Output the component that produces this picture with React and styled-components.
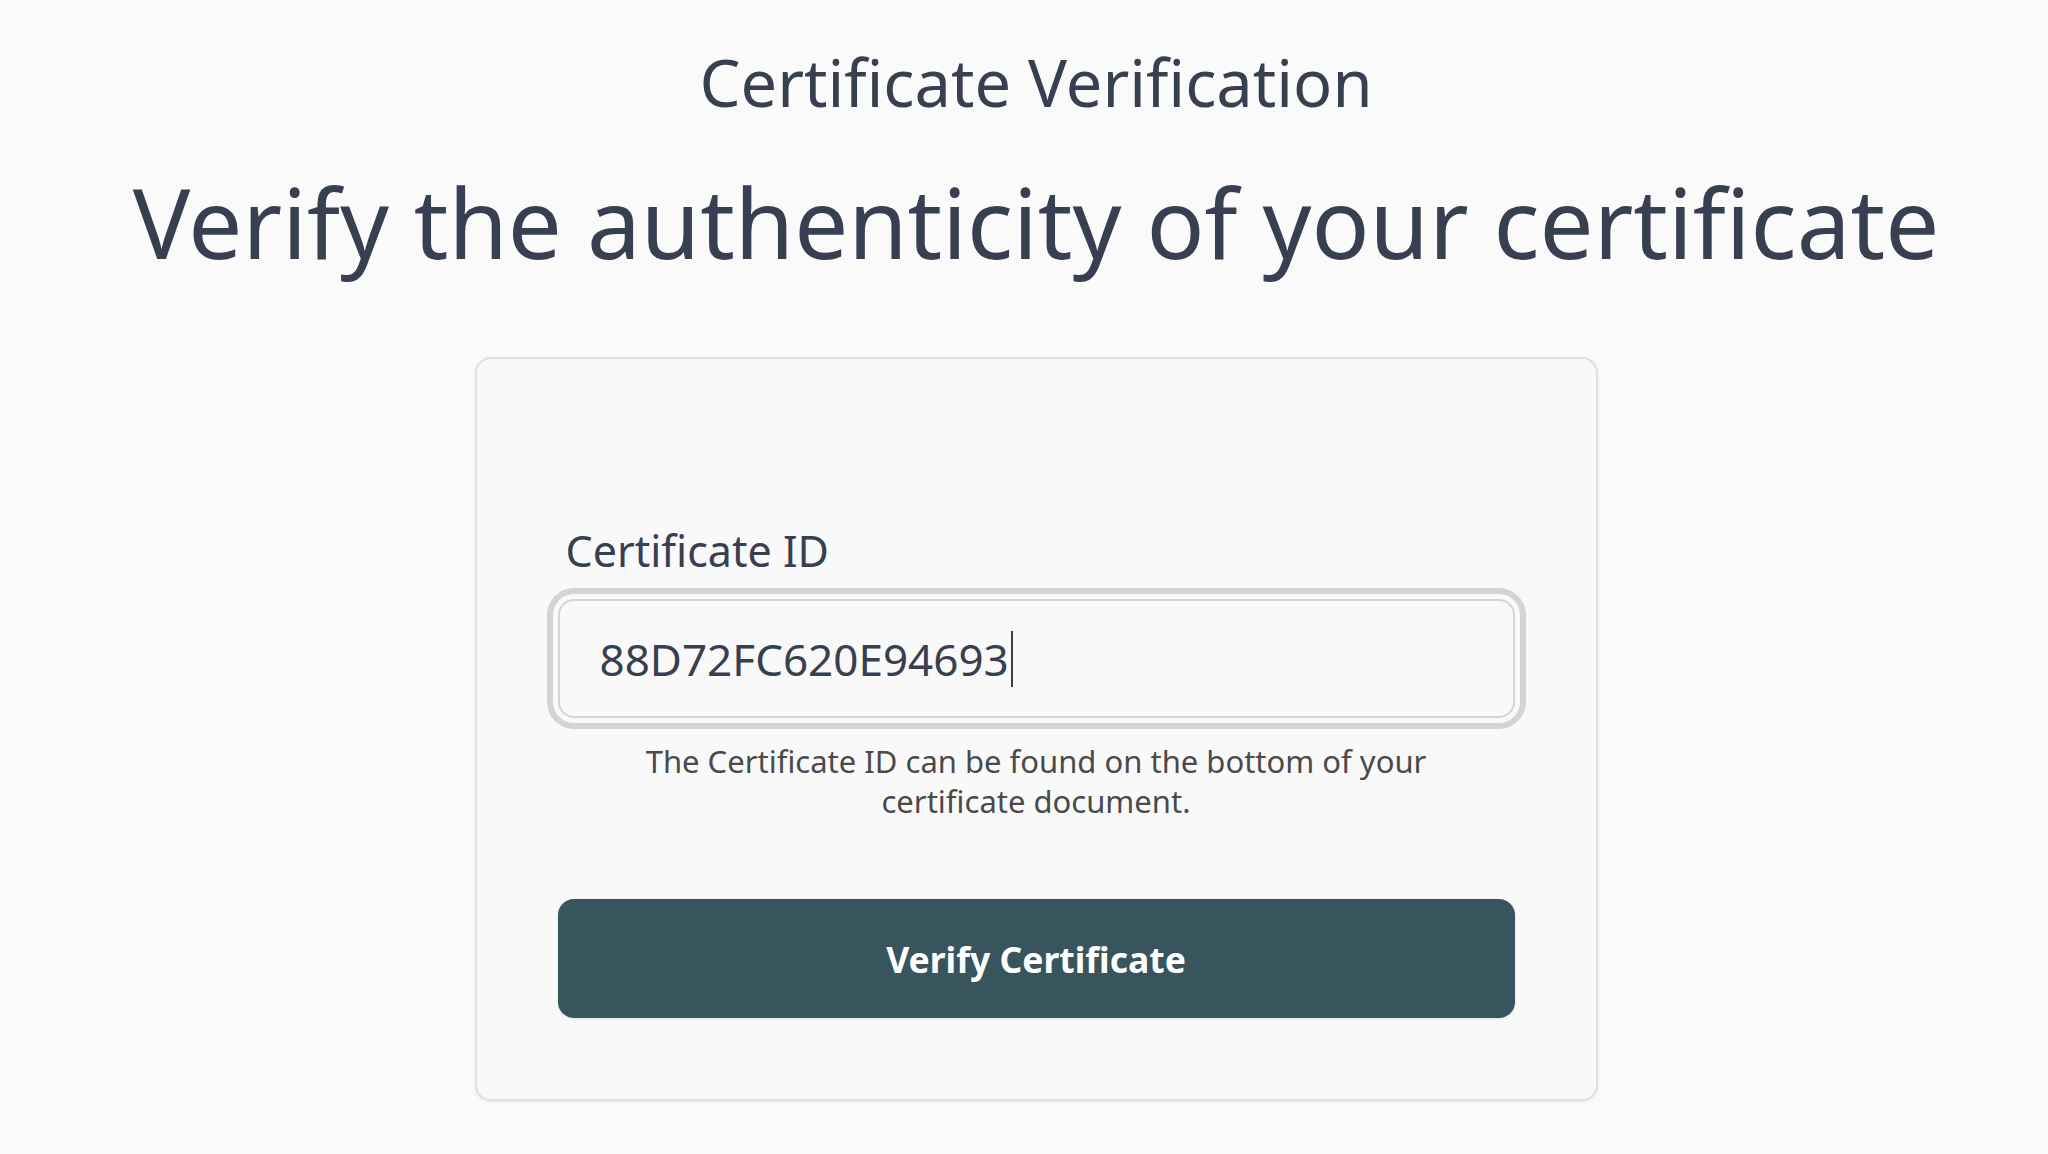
import styled, { createGlobalStyle } from "styled-components";
import { useState } from "react";

const GlobalStyle = createGlobalStyle`
  html, body {
    margin: 0;
    padding: 0;
    background: #fafafa;
  }

  body {
    font-family: "Noto Sans", "Open Sans", sans-serif;
    color: #383f50;
  }
`;

function App() {
  const [certId, setCertId] = useState("88D72FC620E94693");

  return (
    <Page>
      <GlobalStyle />
      <Title>Certificate Verification</Title>
      <Headline>Verify the authenticity of your certificate</Headline>
      <Card>
        <Label htmlFor="cert-id">Certificate ID</Label>
        <Field>
          <Input
            id="cert-id"
            value={certId}
            onChange={(e) => setCertId(e.target.value)}
          />
          <Caret />
        </Field>
        <Hint>
          The Certificate ID can be found on the bottom of your certificate
          document.
        </Hint>
        <Btn type="button">Verify Certificate</Btn>
      </Card>
    </Page>
  );
}

export default App;

const Page = styled.div`
  display: flex;
  flex-direction: column;
  align-items: center;
  padding: 37px 0 0 24px;
  min-height: 1154px;
  box-sizing: border-box;
`;

const Title = styled.h1`
  margin: 0;
  font-size: 65px;
  line-height: 90px;
  font-weight: 400;
  color: #383f50;
`;

const Headline = styled.h2`
  margin: 28px 0 0;
  font-size: 96px;
  line-height: 134px;
  font-weight: 400;
  color: #383f50;
`;

const Card = styled.div`
  margin-top: 68px;
  width: 1123px;
  box-sizing: border-box;
  padding: 162px 81px 81px;
  display: flex;
  flex-direction: column;
  align-items: center;
  border: 2px solid #e0e0e0;
  border-radius: 16px;
  background: #f9f9f9;
  box-shadow: 0 1px 3px rgba(0, 0, 0, 0.08);
`;

const Label = styled.label`
  align-self: flex-start;
  font-size: 43px;
  line-height: 60px;
  color: #383f50;
  padding-left: 8px;
`;

const Field = styled.div`
  position: relative;
  margin-top: 18px;
  width: 100%;
`;

const Input = styled.input`
  display: block;
  width: 100%;
  height: 119px;
  box-sizing: border-box;
  padding: 0 40px;
  border: 2px solid #d2d4d8;
  border-radius: 16px;
  background: #f9f9f9;
  font-family: "Noto Sans", "Open Sans", sans-serif;
  font-size: 44px;
  color: #383f50;
  caret-color: transparent;
  outline: none;
  box-shadow: 0 0 0 5px #f9f9f9, 0 0 0 11px #d2d4d8;
`;

const Caret = styled.span`
  position: absolute;
  left: 453px;
  top: 32px;
  width: 2px;
  height: 56px;
  background: #383f50;
  pointer-events: none;
`;

const Hint = styled.p`
  margin: 23px 0 0;
  max-width: 820px;
  text-align: center;
  font-size: 31px;
  line-height: 40px;
  color: #4a4a4a;
`;

const Btn = styled.button`
  margin-top: 78px;
  width: 100%;
  height: 119px;
  border: none;
  border-radius: 16px;
  background: #38545d;
  color: #ffffff;
  font-family: "Noto Sans", "Open Sans", sans-serif;
  font-size: 35.5px;
  font-weight: 700;
  cursor: pointer;
  box-shadow: 0 1px 3px rgba(0, 0, 0, 0.1);
`;
